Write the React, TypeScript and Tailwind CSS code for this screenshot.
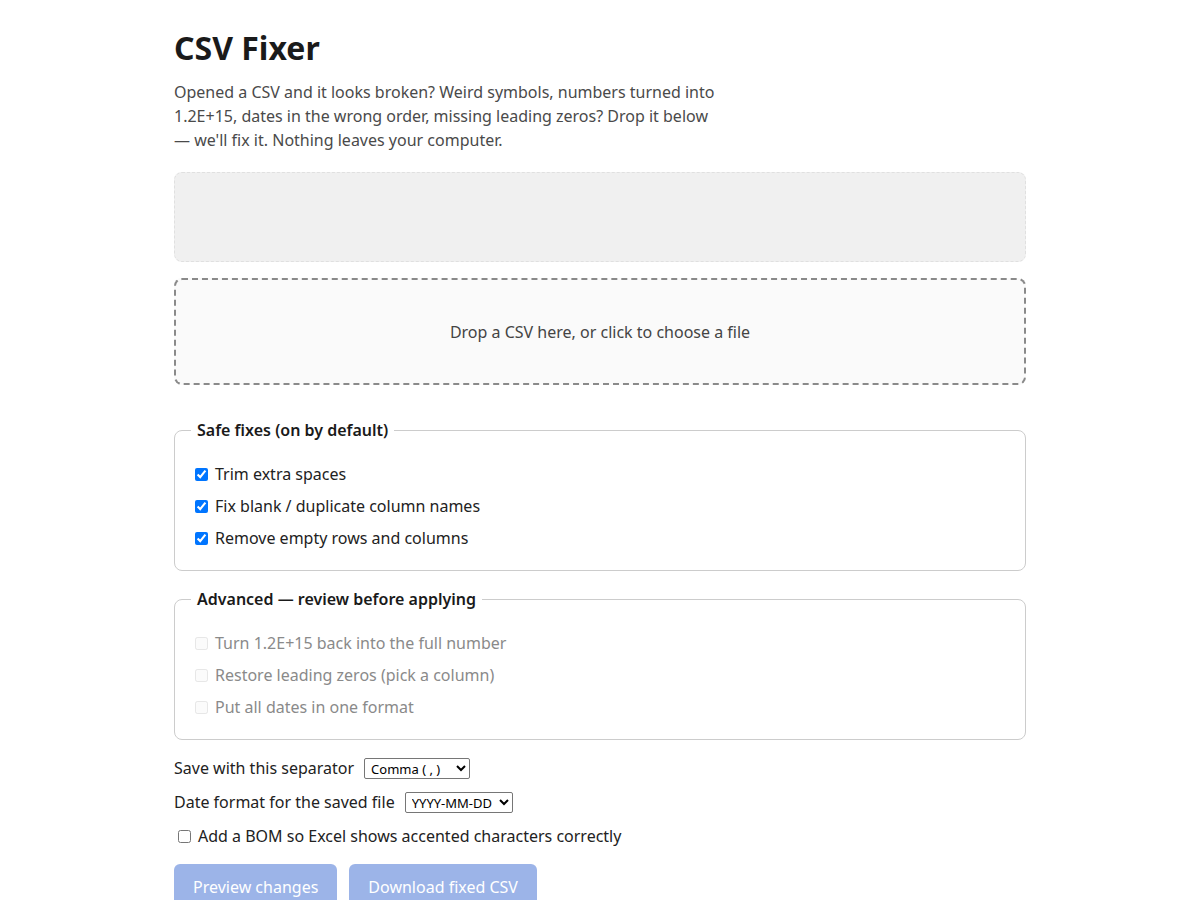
import { useState } from 'react';

const safeFixes = [
  'Trim extra spaces',
  'Fix blank / duplicate column names',
  'Remove empty rows and columns',
];

const advancedFixes = [
  'Turn 1.2E+15 back into the full number',
  'Restore leading zeros (pick a column)',
  'Put all dates in one format',
];

export default function App() {
  const [safe, setSafe] = useState([true, true, true]);
  const [bom, setBom] = useState(false);

  return (
    <div className="min-h-screen bg-white text-[#222] font-['Noto_Sans',sans-serif]">
      <main className="max-w-[900px] mx-auto px-6 pt-[28px] pb-10">
        <h1 className="text-[32px] leading-[40px] font-bold text-[#1a1a1a]">CSV Fixer</h1>
        <p className="mt-[12px] max-w-[546px] text-base leading-6 text-[#4a4a4a]">
          Opened a CSV and it looks broken? Weird symbols, numbers turned into 1.2E+15, dates in the wrong order,
          missing leading zeros? Drop it below — we'll fix it. Nothing leaves your computer.
        </p>

        <div className="mt-[20px] h-[90px] rounded-lg border border-dashed border-[#e0e0e0] bg-[#f0f0f0]" />

        <div className="mt-[16px] h-[107px] rounded-lg border-2 border-dashed border-[#8a8a8a] bg-[#fafafa] flex items-center justify-center cursor-pointer">
          <span className="text-base text-[#444]">Drop a CSV here, or click to choose a file</span>
        </div>

        <fieldset className="mt-[33px] rounded-lg border border-[#cccccc] px-4 pt-[20px] pb-[20px]">
          <legend className="px-[6px] text-base leading-6 font-semibold text-[#1a1a1a]">Safe fixes (on by default)</legend>
          <div className="flex flex-col gap-2">
            {safeFixes.map((label, i) => (
              <label key={label} className="flex items-center gap-[7px] text-base leading-6">
                <input
                  type="checkbox"
                  className="ml-1"
                  checked={safe[i]}
                  onChange={() => setSafe(safe.map((v, j) => (j === i ? !v : v)))}
                />
                {label}
              </label>
            ))}
          </div>
        </fieldset>

        <fieldset className="mt-[16px] rounded-lg border border-[#cccccc] px-4 pt-[20px] pb-[20px]">
          <legend className="px-[6px] text-base leading-6 font-semibold text-[#1a1a1a]">Advanced — review before applying</legend>
          <div className="flex flex-col gap-2">
            {advancedFixes.map((label) => (
              <label key={label} className="flex items-center gap-[7px] text-base leading-6 text-[#8a8a8a]">
                <input type="checkbox" className="ml-1 opacity-50" disabled />
                {label}
              </label>
            ))}
          </div>
        </fieldset>

        <div className="mt-[16px] flex flex-col gap-[10px]">
          <label className="flex items-center gap-[10px] text-base leading-6">
            Save with this separator
            <select className="w-[106px] h-[21px] border border-[#767676] rounded-[2px] bg-white text-[13px] text-black pl-[2px]">
              <option>Comma ( , )</option>
              <option>Semicolon ( ; )</option>
              <option>Tab</option>
            </select>
          </label>
          <label className="flex items-center gap-[10px] text-base leading-6">
            Date format for the saved file
            <select className="w-[108px] h-[21px] border border-[#767676] rounded-[2px] bg-white text-[13px] text-black pl-[2px]">
              <option>YYYY-MM-DD</option>
              <option>DD/MM/YYYY</option>
              <option>MM/DD/YYYY</option>
            </select>
          </label>
          <label className="flex items-center gap-[7px] text-base leading-6">
            <input type="checkbox" className="ml-1" checked={bom} onChange={() => setBom(!bom)} />
            Add a BOM so Excel shows accented characters correctly
          </label>
        </div>

        <div className="mt-[16px] flex gap-3">
          <button disabled className="rounded-md bg-[#9cb4e8] px-[19px] py-[11px] text-base leading-6 text-white">
            Preview changes
          </button>
          <button disabled className="rounded-md bg-[#9cb4e8] px-[19px] py-[11px] text-base leading-6 text-white">
            Download fixed CSV
          </button>
        </div>
      </main>
    </div>
  );
}
